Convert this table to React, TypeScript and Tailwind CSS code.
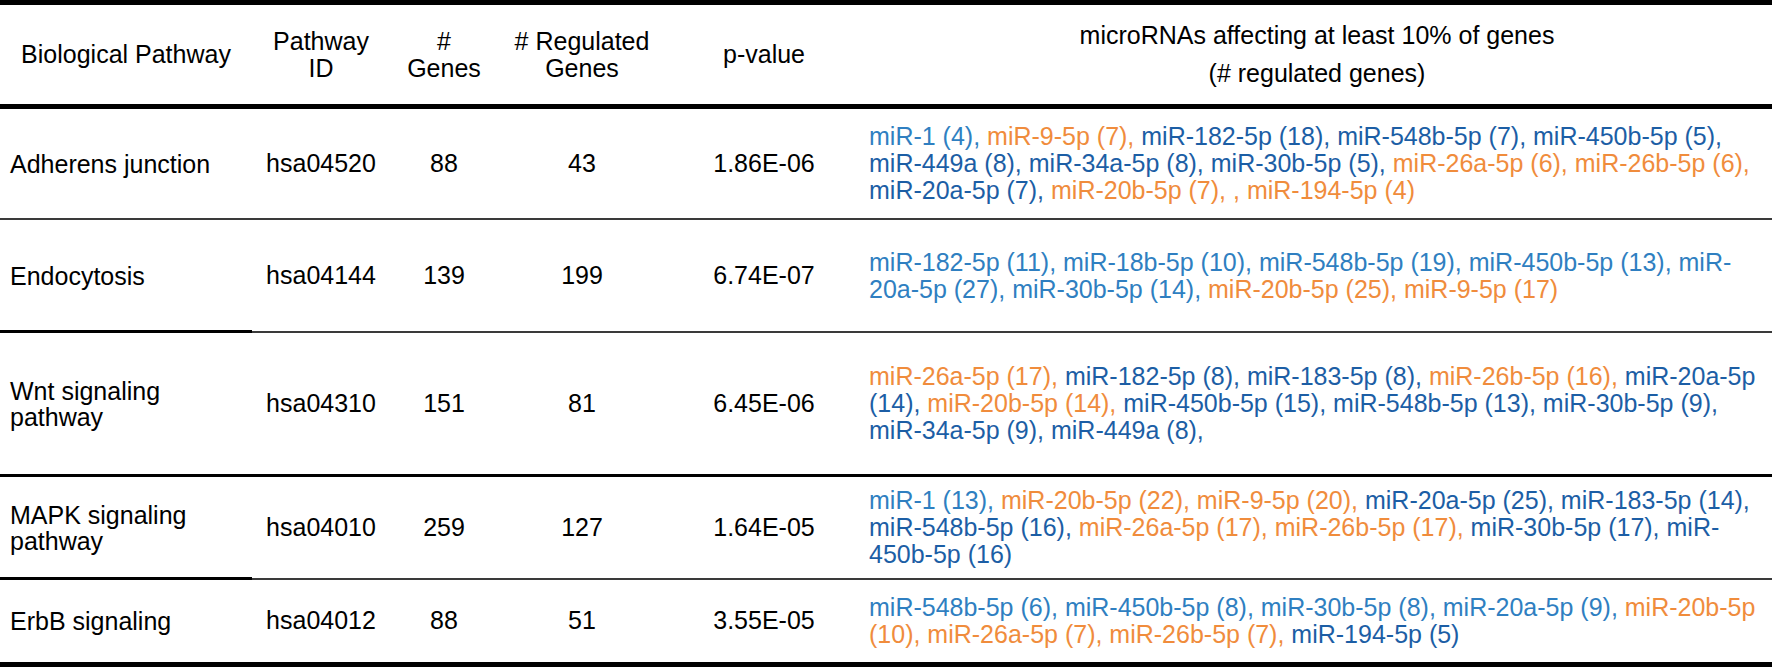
// Pathway enrichment table — microRNAs per KEGG pathway
// Arial-metric text, thick black rules at top / under header / bottom

const COLOR = {
  l: 'text-[#2f7fc1]',
  d: 'text-[#1c5ea5]',
  o: 'text-[#f08c3c]',
};

type Seg = [keyof typeof COLOR, string];

type Row = {
  name: string[];
  id: string;
  genes: string;
  reg: string;
  p: string;
  mirs: Seg[][];
  cls: string;
  thickLeft?: boolean;
};

const ROWS: Row[] = [
  {
    name: ['Adherens junction'],
    id: 'hsa04520',
    genes: '88',
    reg: '43',
    p: '1.86E-06',
    cls: 'h-[111px] border-b-2 border-[#3a3a3a]',
    mirs: [
      [['l', 'miR-1 (4), '], ['o', 'miR-9-5p (7), '], ['d', 'miR-182-5p (18), miR-548b-5p (7), miR-450b-5p (5),']],
      [['d', 'miR-449a (8), miR-34a-5p (8), miR-30b-5p (5), '], ['o', 'miR-26a-5p (6), miR-26b-5p (6),']],
      [['d', 'miR-20a-5p (7), '], ['o', 'miR-20b-5p (7), , miR-194-5p (4)']],
    ],
  },
  {
    name: ['Endocytosis'],
    id: 'hsa04144',
    genes: '139',
    reg: '199',
    p: '6.74E-07',
    cls: 'h-[113px] border-b-2 border-[#3a3a3a]',
    thickLeft: true,
    mirs: [
      [['l', 'miR-182-5p (11), miR-18b-5p (10), miR-548b-5p (19), miR-450b-5p (13), miR-']],
      [['l', '20a-5p (27), miR-30b-5p (14), '], ['o', 'miR-20b-5p (25), miR-9-5p (17)']],
    ],
  },
  {
    name: ['Wnt signaling', 'pathway'],
    id: 'hsa04310',
    genes: '151',
    reg: '81',
    p: '6.45E-06',
    cls: 'h-[144px] border-b-[3px] border-black',
    mirs: [
      [['o', 'miR-26a-5p (17), '], ['d', 'miR-182-5p (8), miR-183-5p (8), '], ['o', 'miR-26b-5p (16), '], ['d', 'miR-20a-5p']],
      [['d', '(14), '], ['o', 'miR-20b-5p (14), '], ['d', 'miR-450b-5p (15), miR-548b-5p (13), miR-30b-5p (9),']],
      [['d', 'miR-34a-5p (9), miR-449a (8),']],
    ],
  },
  {
    name: ['MAPK signaling', 'pathway'],
    id: 'hsa04010',
    genes: '259',
    reg: '127',
    p: '1.64E-05',
    cls: 'h-[103px] border-b-2 border-[#3a3a3a]',
    thickLeft: true,
    mirs: [
      [['l', 'miR-1 (13), '], ['o', 'miR-20b-5p (22), miR-9-5p (20), '], ['d', 'miR-20a-5p (25), miR-183-5p (14),']],
      [['d', 'miR-548b-5p (16), '], ['o', 'miR-26a-5p (17), miR-26b-5p (17), '], ['d', 'miR-30b-5p (17), miR-']],
      [['d', '450b-5p (16)']],
    ],
  },
  {
    name: ['ErbB signaling'],
    id: 'hsa04012',
    genes: '88',
    reg: '51',
    p: '3.55E-05',
    cls: 'h-[87px] border-b-[5px] border-black',
    mirs: [
      [['l', 'miR-548b-5p (6), miR-450b-5p (8), miR-30b-5p (8), miR-20a-5p (9), '], ['o', 'miR-20b-5p']],
      [['o', '(10), miR-26a-5p (7), miR-26b-5p (7), '], ['d', 'miR-194-5p (5)']],
    ],
  },
];

const GRID = 'grid grid-cols-[252px_138px_108px_168px_196px_1fr] items-center';

export default function App() {
  return (
    <div
      className="w-[1772px] h-[667px] bg-white text-black text-[25px] overflow-hidden"
      style={{ fontFamily: '"Liberation Sans", Arial, sans-serif' }}
    >
      {/* Header */}
      <div className={`${GRID} h-[109px] border-y-[5px] border-black leading-[27px] text-center`}>
        <div>Biological Pathway</div>
        <div>
          Pathway
          <br />
          ID
        </div>
        <div>
          #
          <br />
          Genes
        </div>
        <div>
          # Regulated
          <br />
          Genes
        </div>
        <div>p-value</div>
        <div className="flex flex-col items-center gap-[11px]">
          <span>microRNAs affecting at least 10% of genes</span>
          <span>(# regulated genes)</span>
        </div>
      </div>

      {/* Body */}
      {ROWS.map(row => (
        <div key={row.id} className={`${GRID} ${row.cls} relative`}>
          <div className="pl-[10px] leading-[26px]">
            {row.name.map(n => (
              <div key={n}>{n}</div>
            ))}
          </div>
          <div className="text-center">{row.id}</div>
          <div className="text-center">{row.genes}</div>
          <div className="text-center">{row.reg}</div>
          <div className="text-center">{row.p}</div>
          <div className="pl-[7px] leading-[27px]">
            {row.mirs.map((line, i) => (
              <div key={i} className="whitespace-pre">
                {line.map(([c, t], j) => (
                  <span key={j} className={COLOR[c]}>
                    {t}
                  </span>
                ))}
              </div>
            ))}
          </div>
          {/* heavier rule segment under the first column */}
          {row.thickLeft && (
            <div className="absolute left-0 -bottom-[2px] w-[252px] h-[3px] bg-black" />
          )}
        </div>
      ))}
    </div>
  );
}
